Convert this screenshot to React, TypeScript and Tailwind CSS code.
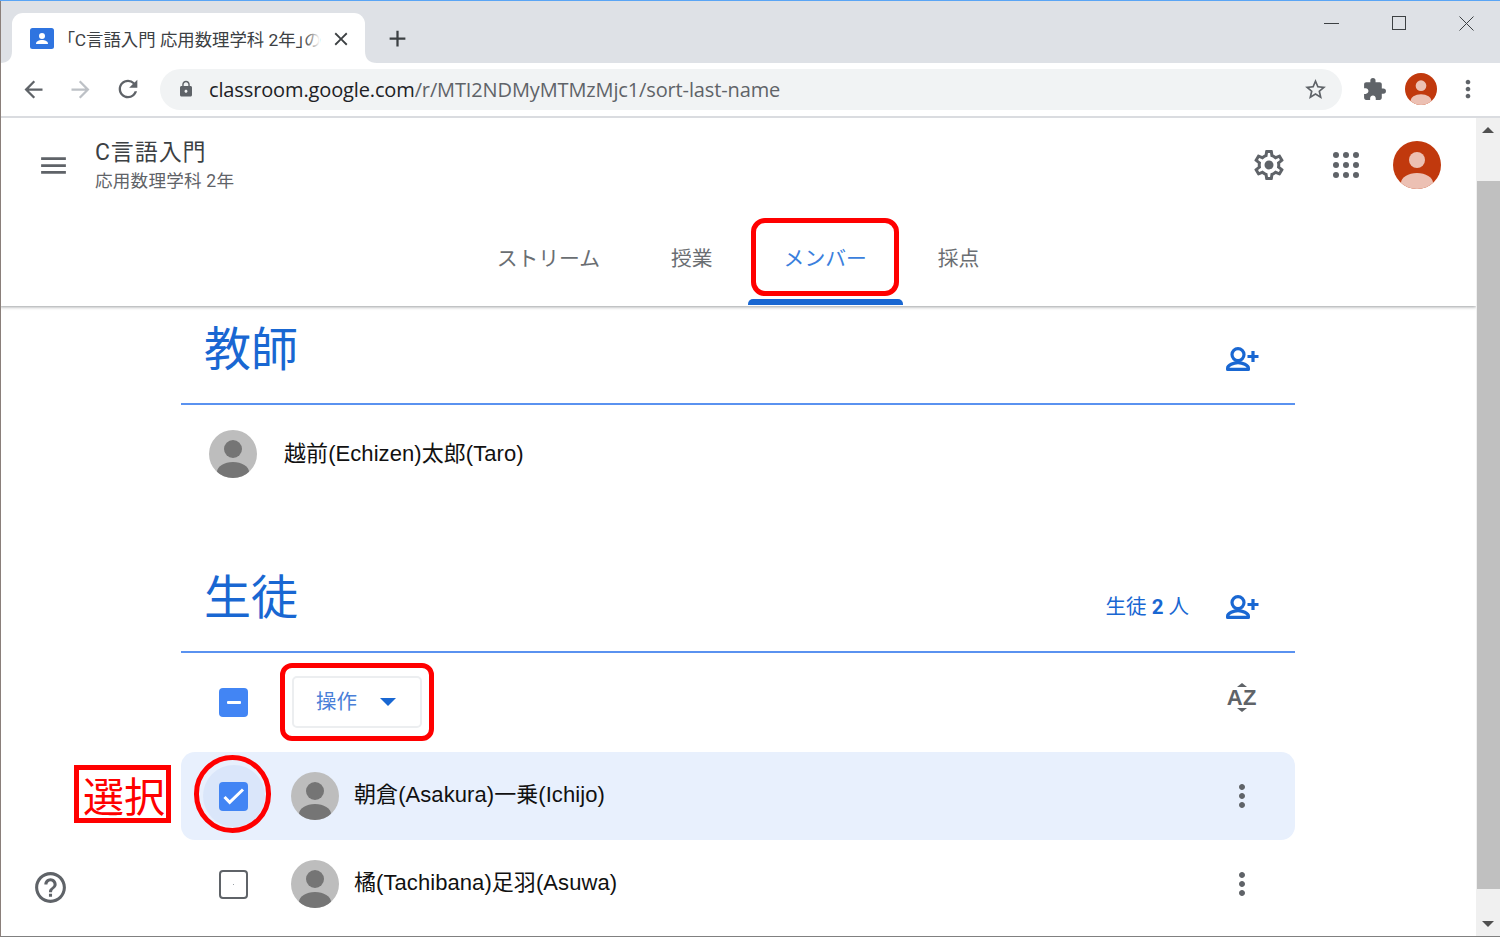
import {
  MdAdd,
  MdArrowBack,
  MdArrowForward,
  MdClose,
  MdExtension,
  MdHelpOutline,
  MdLock,
  MdMenu,
  MdMoreVert,
  MdRefresh,
  MdStarBorder,
} from "react-icons/md";

const FONT = "font-['Liberation_Sans','Noto_Sans_CJK_JP',sans-serif]";

function RedAvatar({ size }: { size: string }) {
  return (
    <svg viewBox="0 0 48 48" className={size}>
      <clipPath id="red-avatar-clip">
        <circle cx="24" cy="24" r="24" />
      </clipPath>
      <g clipPath="url(#red-avatar-clip)">
        <rect width="48" height="48" fill="#c1390d" />
        <circle cx="24" cy="19" r="8" fill="#ecc0b3" />
        <ellipse cx="24" cy="42" rx="16" ry="10" fill="#ecc0b3" />
      </g>
    </svg>
  );
}

function GrayAvatar() {
  return (
    <svg viewBox="0 0 48 48" className="h-12 w-12 shrink-0">
      <clipPath id="gray-avatar-clip">
        <circle cx="24" cy="24" r="24" />
      </clipPath>
      <g clipPath="url(#gray-avatar-clip)">
        <rect width="48" height="48" fill="#bdbdbd" />
        <circle cx="24" cy="19" r="9" fill="#757575" />
        <ellipse cx="24" cy="42" rx="16" ry="10" fill="#757575" />
      </g>
    </svg>
  );
}

function Favicon() {
  return (
    <svg viewBox="0 0 24 21" className="h-[21px] w-6 shrink-0">
      <rect width="24" height="21" rx="2.5" fill="#2f74e0" />
      <circle cx="12" cy="8" r="3" fill="#fff" />
      <path d="M6 16c0-3 3-4 6-4s6 1 6 4z" fill="#fff" />
    </svg>
  );
}

function GearIcon() {
  return (
    <svg viewBox="0 0 24 24" className="ml-auto h-9 w-9" fill="currentColor">
      <path d="M19.43 12.98c.04-.32.07-.64.07-.98 0-.34-.03-.66-.07-.98l2.11-1.65c.19-.15.24-.42.12-.64l-2-3.46c-.09-.16-.26-.25-.44-.25-.06 0-.12.01-.17.03l-2.49 1c-.52-.4-1.08-.73-1.69-.98l-.38-2.65C14.46 2.18 14.25 2 14 2h-4c-.25 0-.46.18-.49.42l-.38 2.65c-.61.25-1.17.59-1.69.98l-2.49-1c-.06-.02-.12-.03-.18-.03-.17 0-.34.09-.43.25l-2 3.46c-.13.22-.07.49.12.64l2.11 1.65c-.04.32-.07.65-.07.98 0 .33.03.66.07.98l-2.11 1.65c-.19.15-.24.42-.12.64l2 3.46c.09.16.26.25.44.25.06 0 .12-.01.17-.03l2.49-1c.52.4 1.08.73 1.69.98l.38 2.65c.03.24.24.42.49.42h4c.25 0 .46-.18.49-.42l.38-2.65c.61-.25 1.17-.59 1.69-.98l2.49 1c.06.02.12.03.18.03.17 0 .34-.09.43-.25l2-3.46c.12-.22.07-.49-.12-.64l-2.11-1.65zm-1.98-1.71c.04.31.05.52.05.73 0 .21-.02.43-.05.73l-.14 1.13.89.7 1.08.84-.7 1.21-1.27-.51-1.04-.42-.9.68c-.43.32-.84.56-1.25.73l-1.06.43-.16 1.13-.2 1.35h-1.4l-.19-1.35-.16-1.13-1.06-.43c-.43-.18-.83-.41-1.23-.71l-.91-.7-1.06.43-1.27.51-.7-1.21 1.08-.84.89-.7-.14-1.13c-.03-.31-.05-.54-.05-.74s.02-.43.05-.73l.14-1.13-.89-.7-1.08-.84.7-1.21 1.27.51 1.04.42.9-.68c.43-.32.84-.56 1.25-.73l1.06-.43.16-1.13.2-1.35h1.39l.19 1.35.16 1.13 1.06.43c.43.18.83.41 1.23.71l.91.7 1.06-.43 1.27-.51.7 1.21-1.07.85-.89.7.14 1.13z" />
      <circle cx="12" cy="12" r="3" />
    </svg>
  );
}

function AddPersonIcon({ className }: { className: string }) {
  return (
    <svg viewBox="0 0 33 24" className={`h-6 w-[33px] shrink-0 ${className}`} fill="none" stroke="#1967d2" strokeWidth="3.2">
      <circle cx="12" cy="7.6" r="6" />
      <path d="M1.6 22.4v-1.2c0-3 6-5.6 10.4-5.6s10.4 2.6 10.4 5.6v1.2z" strokeLinejoin="round" />
      <path d="M27 4v11M21.5 9.5h11" />
    </svg>
  );
}

function AppsGrid() {
  return (
    <div className="grid h-[26px] w-[26px] grid-cols-3 gap-[4px]">
      {Array.from({ length: 9 }).map((_, i) => (
        <span key={i} className="h-[6px] w-[6px] rounded-full bg-[#5f6368]" />
      ))}
    </div>
  );
}

function TabStrip() {
  return (
    <div className="flex h-[62px] shrink-0 bg-[#dee1e6] pl-[12px] pt-[12px]">
      <div className="relative flex w-[353px] items-center rounded-t-[11px] bg-white pl-[18px] pt-[1px]">
        <svg viewBox="0 0 12 12" className="absolute bottom-0 left-[-12px] h-3 w-3">
          <path d="M12 0v12H0C8 12 12 8 12 0z" fill="#fff" />
        </svg>
        <svg viewBox="0 0 12 12" className="absolute bottom-0 right-[-12px] h-3 w-3">
          <path d="M0 0v12h12C4 12 0 8 0 0z" fill="#fff" />
        </svg>
        <Favicon />
        <div className="relative ml-[12px] mt-[3px] w-[254px] whitespace-nowrap font-['Roboto','Noto_Sans_CJK_JP',sans-serif] text-[17.4px] text-[#3c4043] [font-feature-settings:'palt']">
          「C言語入門 応用数理学科 2年」の
          <span className="absolute inset-y-0 right-0 w-4 bg-gradient-to-r from-transparent to-white" />
        </div>
        <MdClose className="ml-[10px] text-[22px] text-[#3c4043]" />
      </div>
      <div className="ml-[19px] flex items-center">
        <MdAdd className="text-[27px] text-[#3c4043]" />
      </div>
      <div className="ml-auto flex items-start pr-[26px] pt-[3px] text-[#3c4043]">
        <span className="mt-[7px] h-[1px] w-[15px] bg-[#3c4043]" />
        <span className="ml-[53px] h-[14px] w-[14px] border border-[#3c4043]" />
        <svg viewBox="0 0 15 15" className="ml-[53px] h-[15px] w-[15px]">
          <path d="M.5.5l14 14M14.5.5l-14 14" stroke="#3c4043" strokeWidth="1" fill="none" />
        </svg>
      </div>
    </div>
  );
}

function Toolbar() {
  return (
    <div className="flex h-[55px] shrink-0 items-center border-b-2 border-[#dadce0] bg-white pb-[1px] text-[#5f6368]">
      <MdArrowBack className="ml-[20px] text-[27px]" />
      <MdArrowForward className="ml-[20px] text-[27px] text-[#bdc1c6]" />
      <MdRefresh className="ml-[20px] text-[28px]" />
      <div className="ml-[18px] flex h-[41px] w-[1182px] items-center rounded-full bg-[#f1f3f4] pl-[17px] pr-[14px]">
        <MdLock className="text-[18px]" />
        <div className="ml-[14px] mt-[2px] whitespace-nowrap font-['Open_Sans',sans-serif] text-[20px] tracking-[-0.13px] text-[#5f6368]">
          <span className="text-[#202124]">classroom.google.com</span>/r/MTI2NDMyMTMzMjc1/sort-last-name
        </div>
        <MdStarBorder className="ml-auto text-[25px]" />
      </div>
      <MdExtension className="ml-[20px] text-[25px]" />
      <div className="ml-[18px]">
        <RedAvatar size="block h-8 w-8" />
      </div>
      <MdMoreVert className="ml-[17px] text-[28px]" />
    </div>
  );
}

function ClassHeader() {
  return (
    <header className="relative z-10 flex h-[188px] shrink-0 flex-col bg-white shadow-[0_1px_3px_rgba(60,64,67,0.5)]">
      <div className="flex h-[94px] items-center pl-[37px] pr-[35px] text-[#5f6368]">
        <MdMenu className="text-[33px] text-[#5f6368]" />
        <div className={`ml-[25px] ${FONT}`}>
          <div className="font-['Roboto','Noto_Sans_CJK_JP',sans-serif] text-[23px] leading-[30px] tracking-[0.9px] text-[#3c4043]">
            C言語入門
          </div>
          <div className="mt-[2px] font-['Roboto','Noto_Sans_CJK_JP',sans-serif] text-[17.6px] leading-[22px] tracking-[0.2px] text-[#5f6368]">
            応用数理学科 2年
          </div>
        </div>
        <GearIcon />
        <div className="ml-[46px]">
          <AppsGrid />
        </div>
        <div className="ml-[34px]">
          <RedAvatar size="block h-12 w-12" />
        </div>
      </div>
      <nav className="flex flex-1 items-center justify-center gap-[71px] pb-[2px] font-['Noto_Sans_CJK_JP',sans-serif] text-[20.8px] text-[#6a6e72]">
        <span>ストリーム</span>
        <span>授業</span>
        <span className="relative text-[#3b7fdd]">
          メンバー
          <span className="absolute bottom-[-31px] left-[-36px] right-[-36px] h-[6px] rounded-t-[5px] bg-[#1967d2]" />
        </span>
        <span>採点</span>
      </nav>
    </header>
  );
}

function Checkbox({ state }: { state: "some" | "on" | "off" }) {
  if (state === "off") {
    return (
      <span className="flex h-[29px] w-[29px] items-center justify-center rounded-[4px] border-[2.5px] border-[#5f6368] bg-white">
        <span className="h-[1px] w-[1px] bg-[#9aa0a6]" />
      </span>
    );
  }
  return (
    <span className="relative z-0 flex h-[29px] w-[29px] items-center justify-center rounded-[4px] bg-[#4285f4] text-white">
      {state === "some" ? (
        <span className="h-[3px] w-[14px] rounded-[1px] bg-white" />
      ) : (
        <svg viewBox="0 0 29 29" className="h-[29px] w-[29px]" fill="none" stroke="#fff" strokeWidth="3">
          <path d="M5.5 15l5.2 5.4L24 7.5" />
        </svg>
      )}
    </span>
  );
}

function SectionTitle({ title, count }: { title: string; count?: boolean }) {
  return (
    <div className="flex h-[99px] items-center border-b-2 border-[#5a92f0] pl-[23px] pr-[36px]">
      <h2 className="mb-[18px] font-['Noto_Sans_CJK_JP',sans-serif] text-[47px] font-normal leading-none text-[#1967d2]">
        {title}
      </h2>
      {count && (
        <div className="ml-auto mt-[9px] font-['Roboto','Noto_Sans_CJK_JP',sans-serif] text-[20.5px] text-[#1967d2]">
          生徒 <span className="font-bold">2</span> 人
        </div>
      )}
      <AddPersonIcon className={`${count ? "ml-[37px]" : "ml-auto"} mt-[9px]`} />
    </div>
  );
}

function StudentRow({ name, selected }: { name: string; selected?: boolean }) {
  return (
    <div
      className={`flex h-[88px] items-center rounded-[14px] pl-[38px] pr-[35px] ${selected ? "bg-[#e8f0fd]" : ""}`}
    >
      <span className="relative flex items-center justify-center">
        {selected && <span className="absolute h-[62px] w-[62px] rounded-full bg-[#dae6fa]" />}
        <Checkbox state={selected ? "on" : "off"} />
      </span>
      <span className="ml-[43px]">
        <GrayAvatar />
      </span>
      <span className={`mb-[3px] ml-[15px] text-[22px] tracking-[0.07px] text-[#111] ${FONT}`}>{name}</span>
      <MdMoreVert className="ml-auto text-[36px] text-[#5f6368]" />
    </div>
  );
}

function SortIcon() {
  return (
    <div className="flex flex-col items-center text-[#5f6368]">
      <span className="h-0 w-0 border-x-[5px] border-b-[4px] border-x-transparent border-b-[#5f6368]" />
      <span className="my-[1px] font-['Liberation_Sans',sans-serif] text-[22px] font-bold leading-[19px] tracking-[0.5px]">
        AZ
      </span>
      <span className="h-0 w-0 border-x-[5px] border-t-[4px] border-x-transparent border-t-[#5f6368]" />
    </div>
  );
}

function Members() {
  return (
    <main className="ml-[181px] w-[1114px]">
      <section className="h-[248px]">
        <SectionTitle title="教師" />
        <div className="flex h-[98px] items-center pl-[28px]">
          <GrayAvatar />
          <span className={`mb-[2px] ml-[27px] text-[22px] tracking-[0.07px] text-[#111] ${FONT}`}>
            越前(Echizen)太郎(Taro)
          </span>
        </div>
      </section>
      <section>
        <SectionTitle title="生徒" count />
        <div className="flex h-[99px] items-center pb-[1px] pl-[38px] pr-[38px]">
          <Checkbox state="some" />
          <button
            type="button"
            className="ml-[44px] flex h-[52px] w-[130px] items-center rounded-[5px] border-2 border-[#eceef0] bg-white pl-[22px] font-['Noto_Sans_CJK_JP',sans-serif] text-[20.5px] text-[#4a7fd8]"
          >
            <span className="mb-[4px]">操作</span>
            <span className="ml-[23px] h-0 w-0 border-x-[8px] border-t-[8px] border-x-transparent border-t-[#1967d2]" />
          </button>
          <div className="ml-auto mb-[10px]">
            <SortIcon />
          </div>
        </div>
        <StudentRow name="朝倉(Asakura)一乗(Ichijo)" selected />
        <StudentRow name="橘(Tachibana)足羽(Asuwa)" />
      </section>
    </main>
  );
}

function Scrollbar() {
  return (
    <div className="flex w-6 shrink-0 flex-col items-center bg-[#f0f0f0]">
      <span className="mr-[1px] mt-[9px] h-0 w-0 border-x-[6px] border-b-[6px] border-x-transparent border-b-[#505050]" />
      <span className="ml-[1px] mt-[48px] h-[708px] w-[23px] bg-[#c0c0c0]" />
      <span className="mr-[1px] mt-[32px] h-0 w-0 border-x-[6px] border-t-[6px] border-x-transparent border-t-[#505050]" />
    </div>
  );
}

export default function App() {
  return (
    <div className="relative h-[937px] w-[1500px] overflow-hidden border-t border-[#5aa5f5] bg-white">
      <div className="flex h-full flex-col border-b border-[#808080]">
        <TabStrip />
        <Toolbar />
        <div className="flex min-h-0 flex-1">
          <div className="flex min-w-0 flex-1 flex-col overflow-hidden">
            <ClassHeader />
            <Members />
          </div>
          <Scrollbar />
        </div>
      </div>

      {/* window edge showing through on the far left */}
      <div className="absolute inset-y-0 left-0 z-20 w-[1px] bg-[#8a7f7a]" />

      {/* floating help button */}
      <MdHelpOutline className="absolute left-[32px] top-[868px] text-[37px] text-[#5f6368]" />

      {/* red annotations drawn over the page */}
      <div className="absolute left-[751px] top-[217px] z-20 h-[78px] w-[148px] rounded-[14px] border-[5px] border-[#ff0000]" />
      <div className="absolute left-[280px] top-[662px] z-20 h-[78px] w-[154px] rounded-[12px] border-[5px] border-[#ff0000]" />
      <div className="absolute left-[194px] top-[754px] z-20 h-[78px] w-[77px] rounded-full border-[5px] border-[#ff0000]" />
      <div className="absolute left-[74px] top-[764px] z-20 flex h-[58px] w-[97px] items-center justify-center border-[5px] border-[#ff0000] bg-white pl-[3px] font-['Noto_Sans_CJK_JP',sans-serif] text-[41px] leading-none text-[#ff0000]">
        選択
      </div>
    </div>
  );
}
